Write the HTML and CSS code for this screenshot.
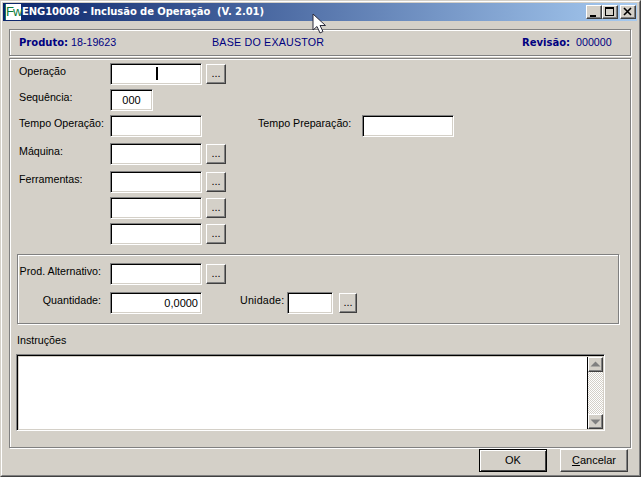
FILE: index.html
```html
<!DOCTYPE html>
<html lang="pt">
<head>
<meta charset="utf-8">
<title>ENG10008</title>
<link rel="stylesheet" href="styles.css">
</head>
<body>
<div class="window">
  <div class="window-inner">
    <div class="titlebar">
      <span class="app-icon">Fw</span>
      <span class="title-text">ENG10008 - Inclusão de Operação&nbsp; (V. 2.01)</span>
      <div class="title-controls">
        <span class="ctl"><svg width="14" height="12" viewBox="0 0 14 12"><rect x="3" y="9" width="6" height="2" fill="#000"/></svg></span>
        <span class="ctl"><svg width="14" height="12" viewBox="0 0 14 12"><path d="M2 1h9v9H2z M3 3v6h7V3z" fill="#000" fill-rule="evenodd"/></svg></span>
        <span class="ctl ctl-close"><svg width="14" height="12" viewBox="0 0 14 12"><path d="M3 2l7 7M10 2l-7 7" stroke="#000" stroke-width="1.6" fill="none"/></svg></span>
      </div>
    </div>

    <div class="panel header">
      <span class="h-label h-produto">Produto:</span>
      <span class="h-code">18-19623</span>
      <span class="h-desc">BASE DO EXAUSTOR</span>
      <span class="h-label">Revisão:</span>
      <span class="h-rev">000000</span>
    </div>

    <div class="panel main">
      <div class="row r1"><label class="lbl">Operação</label><div class="input"><i class="caret"></i></div><button class="more">...</button></div>
      <div class="row r2"><label class="lbl">Sequência:</label><div class="input input-seq">000</div></div>
      <div class="row r2"><label class="lbl">Tempo Operação:</label><div class="input"></div><label class="lbl lbl-prep">Tempo Preparação:</label><div class="input"></div></div>
      <div class="row r3"><label class="lbl">Máquina:</label><div class="input"></div><button class="more">...</button></div>
      <div class="row r3"><label class="lbl">Ferramentas:</label><div class="input"></div><button class="more">...</button></div>
      <div class="row r2"><span class="lbl"></span><div class="input"></div><button class="more">...</button></div>
      <div class="row r2"><span class="lbl"></span><div class="input"></div><button class="more">...</button></div>

      <div class="panel group">
        <div class="row group-row"><label class="lbl lbl-right">Prod. Alternativo:</label><div class="input"></div><button class="more">...</button></div>
        <div class="row group-row qty"><label class="lbl lbl-right">Quantidade:</label><div class="input input-num">0,0000</div><label class="lbl lbl-un">Unidade:</label><div class="input input-un"></div><button class="more more-un">...</button></div>
      </div>

      <div class="instr-label">Instruções</div>
      <div class="memo">
        <div class="memo-text"></div>
        <div class="scrollbar">
          <span class="sb-btn"><svg width="13" height="13" viewBox="0 0 13 13"><path d="M6.5 3.5l5 5h-10z" fill="#808080"/></svg></span>
          <span class="sb-track"></span>
          <span class="sb-btn"><svg width="13" height="13" viewBox="0 0 13 13"><path d="M6.5 9.5l5-5h-10z" fill="#808080"/></svg></span>
        </div>
      </div>
    </div>

    <div class="footer">
      <button class="btn btn-default">OK</button>
      <button class="btn"><u>C</u>ancelar</button>
    </div>
  </div>
  <svg class="pointer" width="16" height="22" viewBox="0 0 16 22"><path d="M1 1v16l4-3.5 3 6.5 3-1.5-3-6h5.5z" fill="#fff" stroke="#2a2a3a" stroke-width="1"/></svg>
</div>
</body>
</html>
```

FILE: styles.css
```css
* { box-sizing: border-box; }
html, body { margin: 0; padding: 0; background: #d4d0c8; }
body { width: 641px; height: 477px; overflow: hidden; font: 10.7px/13px "Liberation Sans", Arial, sans-serif; color: #000; }

.window { position: relative; width: 641px; height: 477px; border: 1px solid; border-color: #d4d0c8 #404040 #404040 #d4d0c8; }
.window-inner { height: 475px; border: 1px solid; border-color: #fff #808080 #808080 #fff; padding: 1px; }

.titlebar { display: flex; align-items: center; height: 18px; width: 634px; padding-left: 2px; padding-right: 1px; background: linear-gradient(90deg, #0a246a, #a6caf0); }
.app-icon { display: block; flex: none; width: 16px; height: 16px; padding-left: 1px; background: #fff; box-shadow: inset 1px 0 #0f7a70; color: #0b7a3a; font: 13px/16px "Liberation Sans", sans-serif; letter-spacing: -1px; white-space: nowrap; }
.title-text { margin-left: 1px; color: #fff; font: bold 10px/18px "DejaVu Sans", sans-serif; letter-spacing: -0.08px; white-space: pre; }
.title-controls { display: flex; margin-left: auto; }
.ctl { display: block; width: 16px; height: 14px; background: #d4d0c8; border: 1px solid; border-color: #fff #404040 #404040 #fff; box-shadow: inset -1px -1px #808080; }
.ctl svg { display: block; }
.ctl-close { margin-left: 2px; }

.panel { border: 1px solid #808080; box-shadow: inset 1px 1px #fff, 1px 1px #fff; }

.header { display: flex; align-items: center; width: 622px; height: 27px; margin: 8px 0 0 6px; padding-left: 9px; color: #000080; }
.h-label { font: bold 10px/13px "DejaVu Sans", sans-serif; }
.h-produto { width: 52px; }
.h-code { width: 141px; }
.h-desc { width: 310px; letter-spacing: 0.2px; }
.h-rev { margin-left: 6px; }

.main { width: 622px; height: 390px; margin: 2px 0 0 6px; padding-top: 4px; }
.row { display: flex; align-items: flex-start; padding-left: 9px; }
.r2 { margin-top: 4px; }
.r3 { margin-top: 6px; }
.lbl { display: block; width: 91px; padding-top: 2px; white-space: nowrap; }

.input { position: relative; width: 92px; height: 22px; background: #fff; border: 1px solid; border-color: #808080 #fff #fff #808080; box-shadow: inset 1px 1px #000, inset -1px -1px #d4d0c8; font-size: 11px; line-height: 21px; }
.input-seq { width: 43px; text-align: center; }
.input-num { text-align: right; padding-right: 3px; }
.input-un { width: 46px; }
.caret { position: absolute; left: 45px; top: 3px; width: 2px; height: 13px; background: #000; }

.more { display: block; width: 20px; height: 20px; margin: 1px 0 0 4px; padding: 0 0 2px; background: #d4d0c8; border: 1px solid; border-color: #fff #404040 #404040 #fff; box-shadow: inset -1px -1px #808080; font: 11px/13px "Liberation Sans", sans-serif; color: #000; }
.more-un { width: 18px; margin-left: 6px; }

.lbl-prep { width: 104px; margin-left: 56px; }

.group { width: 602px; height: 70px; margin: 9px 0 0 7px; padding-top: 8px; }
.group-row { padding-left: 0; }
.group-row .lbl-right { width: 92px; padding: 2px 9px 0 0; text-align: right; }
.qty { margin-top: 7px; }
.group-row .lbl-un { width: 85px; padding: 2px 0 0 38px; letter-spacing: 0.2px; }

.instr-label { margin: 10px 0 0 7px; height: 13px; }
.memo { display: flex; width: 589px; height: 77px; margin: 7px 0 0 6px; border: 1px solid; border-color: #808080 #fff #fff #808080; box-shadow: inset 1px 1px #000, inset -1px -1px #d4d0c8; padding: 2px 1px 1px 2px; }
.memo-text { flex: 1; background: #fff; }
.scrollbar { display: flex; flex-direction: column; width: 16px; border-left: 1px solid #000; margin-left: -1px; }
.sb-btn { display: block; flex: none; width: 15px; height: 15px; background: #d4d0c8; border: 1px solid; border-color: #fff #404040 #404040 #fff; box-shadow: inset -1px -1px #808080; }
.sb-btn svg { display: block; }
.sb-track { flex: 1; background: repeating-conic-gradient(#fff 0 25%, #d4d0c8 0 50%) 0 0 / 2px 2px; }

.footer { display: flex; justify-content: flex-end; gap: 13px; margin-top: 1px; padding-right: 10px; }
.btn { width: 68px; height: 23px; padding: 0; background: #d4d0c8; border: 1px solid; border-color: #fff #404040 #404040 #fff; box-shadow: inset -1px -1px #808080; font: 11px/13px "Liberation Sans", sans-serif; color: #000; }
.btn-default { border-color: #000; box-shadow: inset 1px 1px #fff, inset -1px -1px #404040; }

.pointer { position: absolute; left: 311px; top: 12px; }
```
